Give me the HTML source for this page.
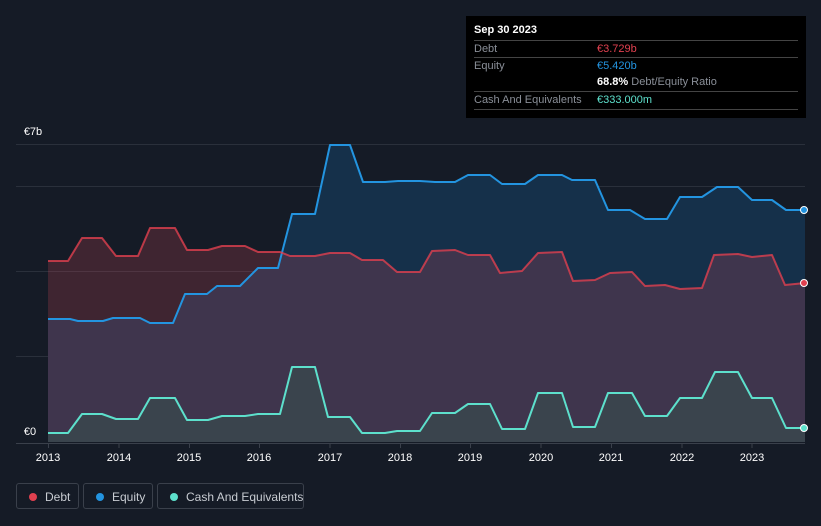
<!DOCTYPE html>
<html><head><meta charset="utf-8"><style>
body{margin:0;width:821px;height:526px;background:#151b26;font-family:"Liberation Sans",sans-serif;overflow:hidden;position:relative}
.tt{position:absolute;left:466px;top:16px;width:340px;height:102px;background:#000;color:#fff;font-size:11px}
.tt .r{position:absolute;left:8px;right:8px;border-top:1px solid #444;height:17px;line-height:17px;color:#8a8f98}
.tt .v{position:absolute;left:123px}
.lg{position:absolute;top:483px;height:26px;border:1px solid #3a404b;border-radius:3px;color:#c8ccd2;font-size:12px;line-height:26px;box-sizing:border-box;white-space:nowrap}
.lg i{position:absolute;top:9px;width:8px;height:8px;border-radius:50%}
</style></head><body>
<svg width="821" height="526" style="position:absolute;left:0;top:0">
<g stroke="#2a303b" stroke-width="1">
<line x1="16" y1="144.5" x2="805" y2="144.5"/><line x1="16" y1="186.5" x2="805" y2="186.5"/>
<line x1="16" y1="271.5" x2="805" y2="271.5"/><line x1="16" y1="356.5" x2="805" y2="356.5"/>
</g>
<path fill="#15304a" d="M48,319 L70,319 78,321 103,321 113,318 140,318 150,323 173,323 185,294 207,294 217,286 240,286 258,268 278,268 292,214 315,214 330,145 350,145 363,182 385,182 398,181 420,181 435,182 455,182 468,175 490,175 502,184 525,184 538,175 562,175 572,180 595,180 608,210 630,210 645,219 667,219 680,197 702,197 717,187 738,187 752,200 772,200 786,210 805,210 L805,442 48,442Z"/>
<path fill="#d64a5a" fill-opacity="0.22" d="M48,261 L68,261 82,238 102,238 116,256 138,256 150,228 175,228 187,250 208,250 222,246 245,246 258,252 280,252 290,256 315,256 330,253 350,253 362,260 383,260 397,272 420,272 432,251 455,250 468,255 490,255 500,273 522,271 538,253 562,252 573,281 595,280 610,273 632,272 645,286 665,285 680,289 702,288 714,255 738,254 752,257 772,255 785,285 805,283 L805,442 48,442Z"/>
<path fill="#37504f" fill-opacity="0.55" d="M48,433 L68,433 82,414 102,414 116,419 138,419 150,398 175,398 187,420 208,420 222,416 245,416 258,414 280,414 292,367 315,367 328,417 350,417 362,433 385,433 397,431 420,431 432,413 455,413 468,404 490,404 502,429 525,429 538,393 562,393 573,427 595,427 608,393 632,393 645,416 667,416 680,398 702,398 715,372 738,372 752,398 772,398 786,428 805,428 L805,442 48,442Z"/>
<g fill="none" stroke-width="2" stroke-linejoin="round">
<path stroke="#2394e0" d="M48,319 L70,319 78,321 103,321 113,318 140,318 150,323 173,323 185,294 207,294 217,286 240,286 258,268 278,268 292,214 315,214 330,145 350,145 363,182 385,182 398,181 420,181 435,182 455,182 468,175 490,175 502,184 525,184 538,175 562,175 572,180 595,180 608,210 630,210 645,219 667,219 680,197 702,197 717,187 738,187 752,200 772,200 786,210 805,210"/>
<path stroke="#e0404f" d="M48,261 L68,261 82,238 102,238 116,256 138,256 150,228 175,228 187,250 208,250 222,246 245,246 258,252 280,252 290,256 315,256 330,253 350,253 362,260 383,260 397,272 420,272 432,251 455,250 468,255 490,255 500,273 522,271 538,253 562,252 573,281 595,280 610,273 632,272 645,286 665,285 680,289 702,288 714,255 738,254 752,257 772,255 785,285 805,283" stroke-opacity="0.8"/>
<path stroke="#5de0cc" d="M48,433 L68,433 82,414 102,414 116,419 138,419 150,398 175,398 187,420 208,420 222,416 245,416 258,414 280,414 292,367 315,367 328,417 350,417 362,433 385,433 397,431 420,431 432,413 455,413 468,404 490,404 502,429 525,429 538,393 562,393 573,427 595,427 608,393 632,393 645,416 667,416 680,398 702,398 715,372 738,372 752,398 772,398 786,428 805,428"/>
</g>
<circle cx="804" cy="210" r="3.5" fill="#2394e0" stroke="#fff" stroke-width="1"/>
<circle cx="804" cy="283" r="3.5" fill="#e0404f" stroke="#fff" stroke-width="1"/>
<circle cx="804" cy="428" r="3.5" fill="#5de0cc" stroke="#fff" stroke-width="1"/>
<line x1="16" y1="443.5" x2="805" y2="443.5" stroke="#3a404b"/>
<g stroke="#3a404b"><line x1="48.5" y1="443" x2="48.5" y2="448"/><line x1="119" y1="443" x2="119" y2="448"/><line x1="189.5" y1="443" x2="189.5" y2="448"/><line x1="259.5" y1="443" x2="259.5" y2="448"/><line x1="330" y1="443" x2="330" y2="448"/><line x1="400.5" y1="443" x2="400.5" y2="448"/><line x1="470.5" y1="443" x2="470.5" y2="448"/><line x1="541" y1="443" x2="541" y2="448"/><line x1="611.5" y1="443" x2="611.5" y2="448"/><line x1="682" y1="443" x2="682" y2="448"/><line x1="752" y1="443" x2="752" y2="448"/></g>
<g fill="#fff" font-size="11" font-family="Liberation Sans" text-anchor="middle">
<text x="48" y="461">2013</text><text x="119" y="461">2014</text><text x="189" y="461">2015</text><text x="259" y="461">2016</text><text x="330" y="461">2017</text><text x="400" y="461">2018</text><text x="470" y="461">2019</text><text x="541" y="461">2020</text><text x="611" y="461">2021</text><text x="682" y="461">2022</text><text x="752" y="461">2023</text>
<text x="33" y="135">€7b</text><text x="30" y="435">€0</text>
</g>
</svg>
<div class="tt">
<div style="position:absolute;left:8px;top:8px;font-weight:bold;color:#fff">Sep 30 2023</div>
<div class="r" style="top:24px">Debt<span class="v" style="color:#e0404f">€3.729b</span></div>
<div class="r" style="top:41px">Equity<span class="v" style="color:#2394e0">€5.420b</span></div>
<div class="r" style="top:58px;border-top:none"><span class="v"><b style="color:#fff">68.8%</b> Debt/Equity Ratio</span></div>
<div class="r" style="top:75px">Cash And Equivalents<span class="v" style="color:#5de0cc">€333.000m</span></div>
<div class="r" style="top:93px;height:0"></div>
</div>
<div class="lg" style="left:16px;width:63px"><i style="left:12px;background:#e0404f"></i><span style="position:absolute;left:28px">Debt</span></div>
<div class="lg" style="left:83px;width:70px"><i style="left:12px;background:#2394e0"></i><span style="position:absolute;left:28px">Equity</span></div>
<div class="lg" style="left:157px;width:147px"><i style="left:12px;background:#5de0cc"></i><span style="position:absolute;left:28px">Cash And Equivalents</span></div>
</body></html>
